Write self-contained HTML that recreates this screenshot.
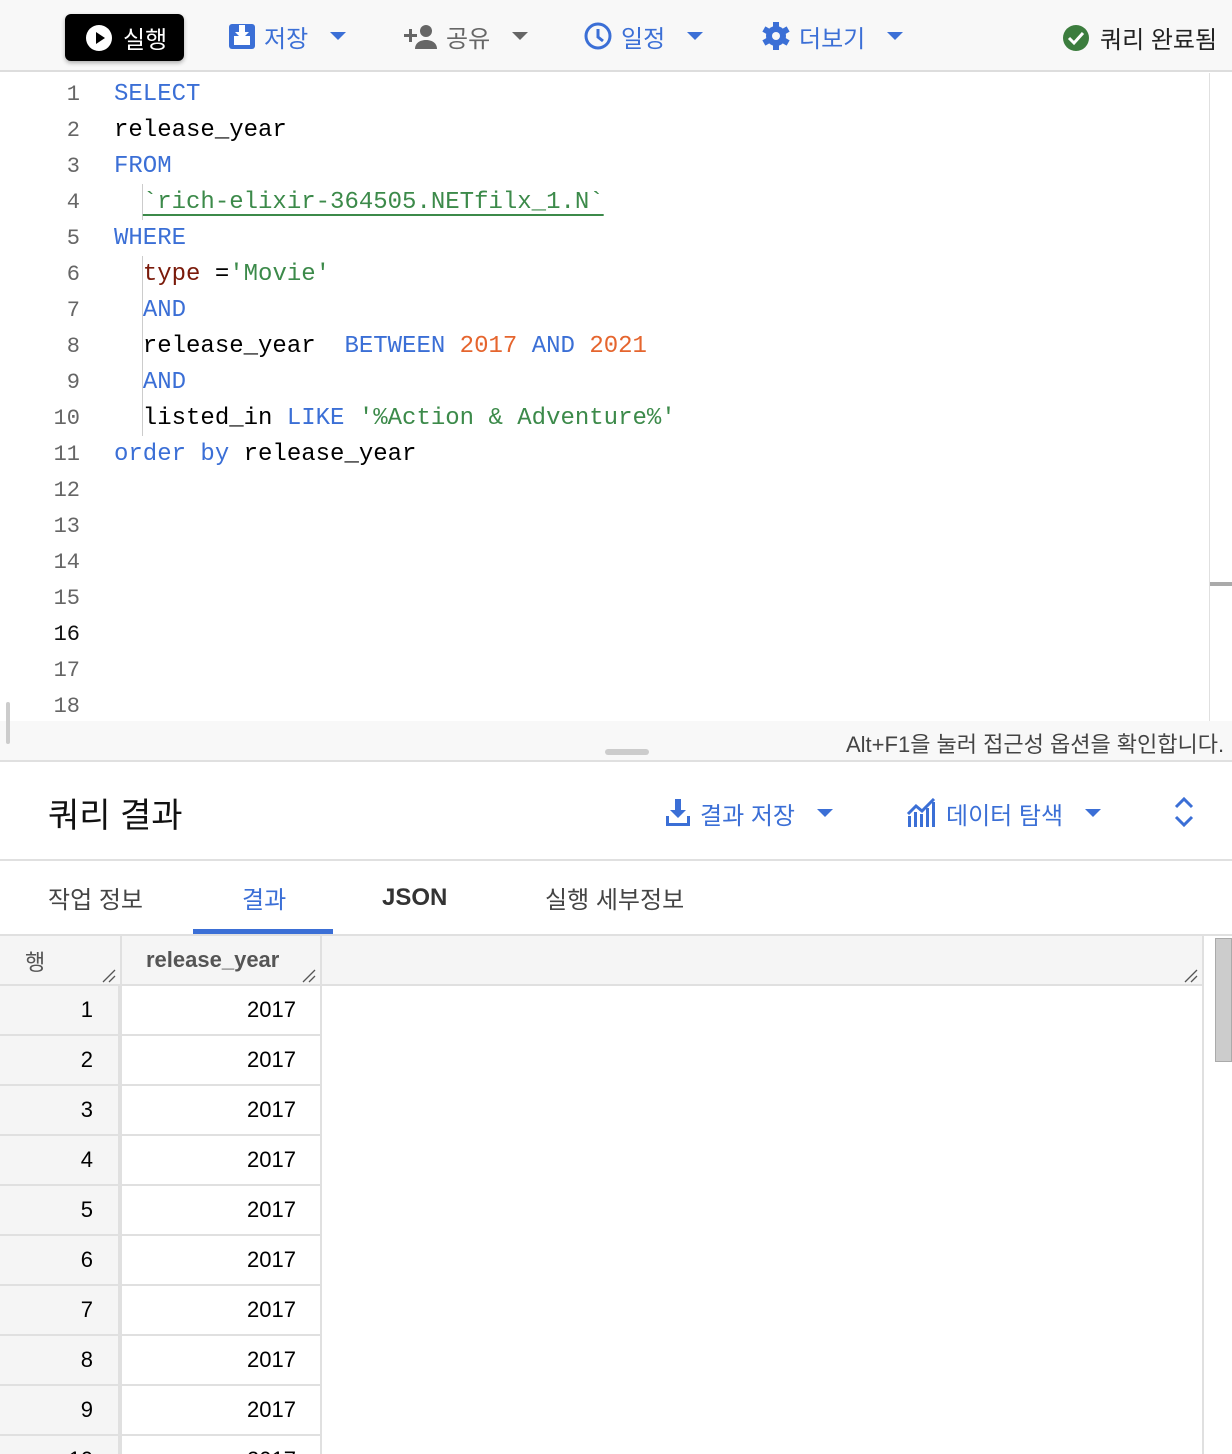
<!DOCTYPE html>
<html style="width:1232px;height:1454px;overflow:hidden"><head><meta charset="utf-8"><style>
*{margin:0;padding:0;box-sizing:border-box}
body{width:1232px;height:1454px;overflow:hidden;background:#fff;font-family:"Liberation Sans","Noto Sans CJK KR",sans-serif;position:relative}
.a{position:absolute}
.tb{left:0;top:0;width:1232px;height:72px;background:#f8f8f8;border-bottom:2px solid #ddd}
.btn{font-size:24px;color:#3b6fd6;display:flex;align-items:center;gap:8px;top:18px;height:36px}
.tri{width:0;height:0;border-left:8px solid transparent;border-right:8px solid transparent;border-top:8px solid #3b6fd6;margin-left:14px}
.code{font-family:"Liberation Mono",monospace;font-size:24px;line-height:36px;white-space:pre;left:114px;top:77px}
.ln{font-family:"Liberation Mono",monospace;font-size:22px;line-height:36px;color:#666;text-align:right;left:20px;width:60px;top:77px;white-space:pre}
.k{color:#3b6fd6}.s{color:#3c8a4a}.n{color:#e5652e}.t{color:#7a1a0a}
.row{left:0;width:322px;height:50px;border-bottom:2px solid #e0e0e0;font-size:22px}
.row .c0{position:absolute;left:0;width:120px;height:48px;background:#f5f5f5;border-right:2px solid #e0e0e0;text-align:right;padding-right:25px;line-height:48px}
.row .c1{position:absolute;left:120px;width:202px;height:48px;border-right:2px solid #e0e0e0;text-align:right;padding-right:24px;line-height:48px}
.grip{position:absolute;width:14px;height:14px}
</style></head><body>
<div class="a tb"></div>
<div class="a" style="left:65px;top:14px;width:119px;height:47px;background:#000;border-radius:6px;box-shadow:0 2px 4px rgba(0,0,0,.3);color:#fff;font-size:24px;display:flex;align-items:center;padding-left:20px;gap:10px">
<svg width="28" height="28" viewBox="0 0 28 28"><circle cx="14" cy="14" r="13" fill="#fff"/><path d="M11 8v12l9-6z" fill="#000"/></svg>실행</div>
<div class="a btn" style="left:228px"><svg width="28" height="28" viewBox="0 0 28 28"><rect x="1" y="2" width="26" height="25" rx="3" fill="#3b6fd6"/><rect x="6" y="14" width="16" height="9" fill="#fff"/><path d="M11 3h6v7h4l-7 7-7-7h4z" fill="#fff"/></svg>저장<span class="tri"></span></div>
<div class="a btn" style="left:402px;color:#666"><svg width="36" height="28" viewBox="0 0 36 28"><path d="M2 12h5V7h3v5h5v3h-5v5H7v-5H2z" fill="#666"/><circle cx="24" cy="9" r="6" fill="#666"/><path d="M13 27c0-6 5-9 11-9s11 3 11 9z" fill="#666"/></svg>공유<span class="tri" style="border-top-color:#666"></span></div>
<div class="a btn" style="left:583px"><svg width="30" height="30" viewBox="0 0 30 30"><circle cx="15" cy="15" r="12" fill="none" stroke="#3b6fd6" stroke-width="3"/><path d="M15 8v8l5 4" fill="none" stroke="#3b6fd6" stroke-width="3"/></svg>일정<span class="tri"></span></div>
<div class="a btn" style="left:761px"><svg width="30" height="30" viewBox="0 0 30 30"><g fill="#3b6fd6"><circle cx="15" cy="15" r="10"/><rect x="12" y="1" width="6" height="28"/><rect x="12" y="1" width="6" height="28" transform="rotate(60 15 15)"/><rect x="12" y="1" width="6" height="28" transform="rotate(120 15 15)"/></g><circle cx="15" cy="15" r="4" fill="#f8f8f8"/></svg>더보기<span class="tri"></span></div>
<div class="a" style="left:1062px;top:20px;display:flex;align-items:center;gap:10px;font-size:24px;color:#222"><svg width="28" height="28" viewBox="0 0 28 28"><circle cx="14" cy="14" r="13" fill="#3c7d3e"/><path d="M7 14l5 5 9-10" fill="none" stroke="#fff" stroke-width="3"/></svg>쿼리 완료됨</div>

<div class="a ln">1
2
3
4
5
6
7
8
9
10
11
12
13
14
15
<span style="color:#111">16</span>
17
18</div>
<div class="a" style="left:142px;top:184px;width:1px;height:36px;background:#ccc"></div>
<div class="a" style="left:142px;top:256px;width:1px;height:180px;background:#ccc"></div>
<div class="a code"><span class="k">SELECT</span>
release_year
<span class="k">FROM</span>
  <span class="s" style="text-decoration:underline;text-underline-offset:6px">`rich-elixir-364505.NETfilx_1.N`</span>
<span class="k">WHERE</span>
  <span class="t">type</span> =<span class="s">'Movie'</span>
  <span class="k">AND</span>
  release_year  <span class="k">BETWEEN</span> <span class="n">2017</span> <span class="k">AND</span> <span class="n">2021</span>
  <span class="k">AND</span>
  listed_in <span class="k">LIKE</span> <span class="s">'%Action &amp; Adventure%'</span>
<span class="k">order by</span> release_year</div>
<div class="a" style="left:1209px;top:73px;width:1px;height:648px;background:#e0e0e0"></div>
<div class="a" style="left:1210px;top:582px;width:22px;height:4px;background:#aaa"></div>
<div class="a" style="left:0;top:721px;width:1232px;height:41px;background:#f8f8f8;border-bottom:2px solid #e0e0e0"></div>
<div class="a" style="left:6px;top:702px;width:4px;height:42px;background:#ccc;border-radius:2px"></div>
<div class="a" style="left:605px;top:749px;width:44px;height:6px;background:#ccc;border-radius:3px"></div>
<div class="a" style="left:846px;top:727px;font-size:22px;color:#444;white-space:nowrap">Alt+F1을 눌러 접근성 옵션을 확인합니다.</div>

<div class="a" style="left:48px;top:788px;font-size:34px;color:#111">쿼리 결과</div>
<div class="a btn" style="left:664px;top:795px"><svg width="28" height="30" viewBox="0 0 28 30"><path d="M11 1h6v11h5l-8 8-8-8h5z" fill="#3b6fd6"/><path d="M2 18v10h24V18h-3v7H5v-7z" fill="#3b6fd6"/></svg>결과 저장<span class="tri"></span></div>
<div class="a btn" style="left:906px;top:795px"><svg width="32" height="30" viewBox="0 0 32 30"><g fill="#3b6fd6"><rect x="2" y="18" width="3" height="11"/><rect x="8" y="14" width="3" height="15"/><rect x="14" y="16" width="3" height="13"/><rect x="20" y="10" width="3" height="19"/><rect x="26" y="4" width="3" height="25"/></g><path d="M2 16l8-8 6 5 12-12" fill="none" stroke="#3b6fd6" stroke-width="3"/></svg>데이터 탐색<span class="tri"></span></div>
<svg class="a" style="left:1172px;top:795px" width="24" height="34" viewBox="0 0 24 34"><path d="M4 12l8-8 8 8M4 22l8 8 8-8" fill="none" stroke="#3b6fd6" stroke-width="3"/></svg>
<div class="a" style="left:0;top:859px;width:1232px;height:2px;background:#e0e0e0"></div>
<div class="a" style="left:48px;top:880px;font-size:24px;color:#444">작업 정보</div>
<div class="a" style="left:242px;top:880px;font-size:24px;color:#3b6fd6">결과</div>
<div class="a" style="left:382px;top:884px;font-size:24px;color:#333;font-weight:bold">JSON</div>
<div class="a" style="left:545px;top:880px;font-size:24px;color:#444">실행 세부정보</div>
<div class="a" style="left:193px;top:929px;width:140px;height:5px;background:#3b6fd6"></div>
<div class="a" style="left:0;top:934px;width:1232px;height:2px;background:#e0e0e0"></div>

<div class="a" style="left:0;top:936px;width:1202px;height:50px;background:#f5f5f5;border-bottom:2px solid #e0e0e0"></div>
<div class="a" style="left:120px;top:936px;width:2px;height:518px;background:#e0e0e0"></div>
<div class="a" style="left:320px;top:936px;width:2px;height:518px;background:#e0e0e0"></div>
<div class="a" style="left:1202px;top:936px;width:2px;height:518px;background:#e0e0e0"></div>
<svg class="grip" style="left:102px;top:969px" viewBox="0 0 14 14"><path d="M1 13L13 1M7 13L13 7" stroke="#555" stroke-width="1.3"/></svg>
<svg class="grip" style="left:302px;top:969px" viewBox="0 0 14 14"><path d="M1 13L13 1M7 13L13 7" stroke="#555" stroke-width="1.3"/></svg>
<svg class="grip" style="left:1184px;top:969px" viewBox="0 0 14 14"><path d="M1 13L13 1M7 13L13 7" stroke="#555" stroke-width="1.3"/></svg>
<div class="a" style="left:25px;top:945px;font-size:22px;color:#555">행</div>
<div class="a" style="left:146px;top:947px;font-size:22px;color:#555;font-weight:bold">release_year</div>
<div class="a" style="left:0;top:986px;width:120px;height:468px;background:#f5f5f5"></div>
<div class="a" style="left:1215px;top:938px;width:17px;height:124px;background:#ccc;border:1px solid #aaa"></div>
<div class="a" style="left:0;top:986px">
<div class="a row" style="top:0"><div class="c0">1</div><div class="c1">2017</div></div>
<div class="a row" style="top:50px"><div class="c0">2</div><div class="c1">2017</div></div>
<div class="a row" style="top:100px"><div class="c0">3</div><div class="c1">2017</div></div>
<div class="a row" style="top:150px"><div class="c0">4</div><div class="c1">2017</div></div>
<div class="a row" style="top:200px"><div class="c0">5</div><div class="c1">2017</div></div>
<div class="a row" style="top:250px"><div class="c0">6</div><div class="c1">2017</div></div>
<div class="a row" style="top:300px"><div class="c0">7</div><div class="c1">2017</div></div>
<div class="a row" style="top:350px"><div class="c0">8</div><div class="c1">2017</div></div>
<div class="a row" style="top:400px"><div class="c0">9</div><div class="c1">2017</div></div>
<div class="a row" style="top:450px"><div class="c0">10</div><div class="c1">2017</div></div>
</div>
</body></html>
